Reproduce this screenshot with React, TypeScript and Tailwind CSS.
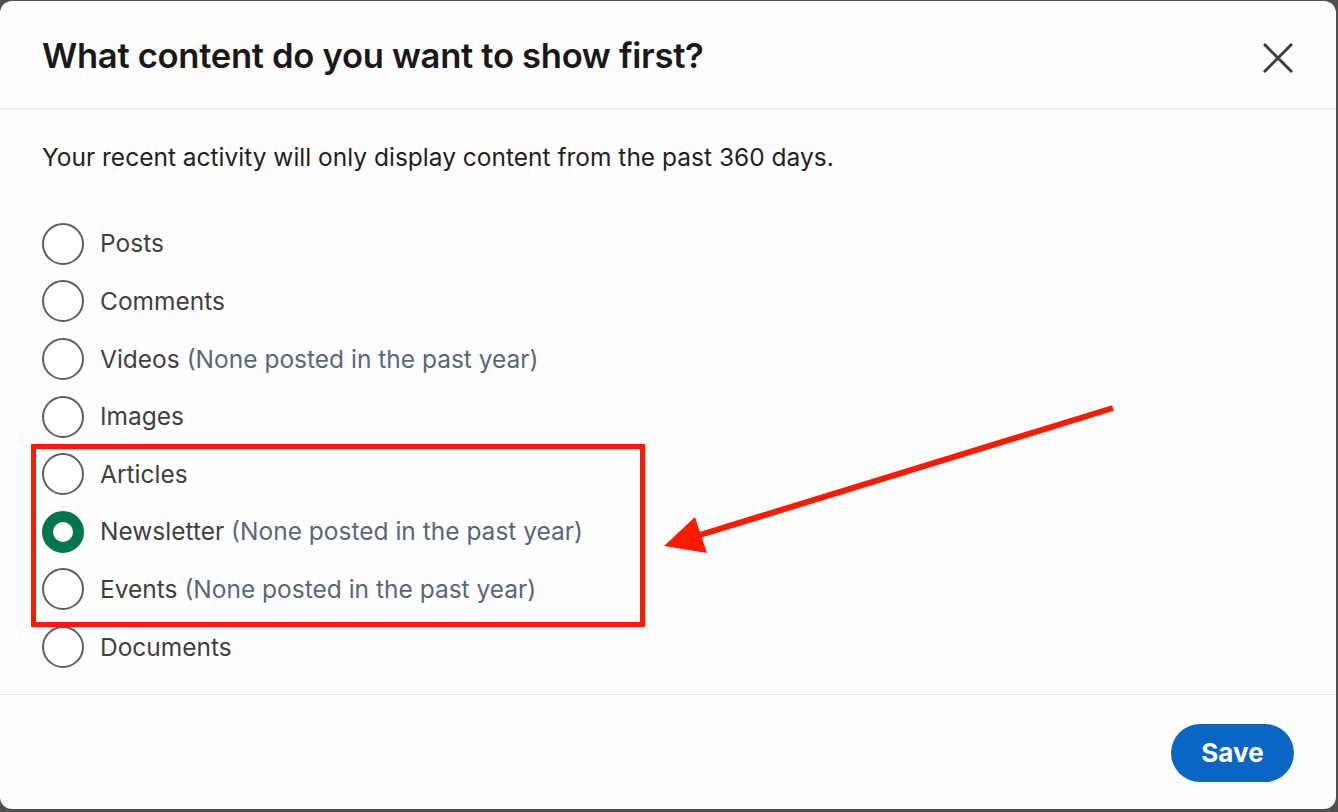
import React from "react";

type Option = { label: string; hint?: string; checked?: boolean };

const options: Option[] = [
  { label: "Posts" },
  { label: "Comments" },
  { label: "Videos", hint: "(None posted in the past year)" },
  { label: "Images" },
  { label: "Articles" },
  { label: "Newsletter", hint: "(None posted in the past year)", checked: true },
  { label: "Events", hint: "(None posted in the past year)" },
  { label: "Documents" },
];

function Radio({ checked }: { checked?: boolean }) {
  if (checked) {
    return <span className="block h-[42px] w-[42px] shrink-0 rounded-full border-[11px] border-[#01754f] bg-white" />;
  }
  return <span className="block h-[42px] w-[42px] shrink-0 rounded-full border-2 border-[#5e5e5e] bg-white" />;
}

export default function App() {
  return (
    <div className="h-[812px] w-full overflow-hidden bg-[#4f4f4f] pt-px pr-[2px] pb-[3px] font-['Inter',sans-serif]">
      <div className="relative flex h-full flex-col rounded-[12px] bg-[#fefefe]">
        {/* header */}
        <div className="flex h-[108px] shrink-0 items-center justify-between border-b border-[#e8e8e8] pl-[42px] pr-[42px]">
          <h1 className="pt-[2px] text-[34.6px] font-semibold tracking-[-0.3px] text-[#191919]">
            What content do you want to show first?
          </h1>
          <svg width="30" height="30" viewBox="0 0 30 30" className="mt-[6px] mr-[1px]">
            <path d="M1 1 L29 29 M29 1 L1 29" stroke="#3d3d3d" strokeWidth="3" />
          </svg>
        </div>

        {/* body */}
        <div className="flex-1 pl-[42px] pt-[31px]">
          <p className="text-[24.5px] leading-[34px] text-[#1f1f1f]">
            Your recent activity will only display content from the past 360 days.
          </p>
          <div className="mt-[41px] flex flex-col">
            {options.map((o) => (
              <label key={o.label} className="flex h-[57.6px] items-center gap-[16px]">
                <Radio checked={o.checked} />
                <span className="text-[24.5px] text-[#3f3f3f]">
                  {o.label}
                  {o.hint && <span className="text-[#56687a]"> {o.hint}</span>}
                </span>
              </label>
            ))}
          </div>
        </div>

        {/* footer */}
        <div className="flex h-[115px] shrink-0 items-center justify-end border-t border-[#e8e8e8] pr-[42px]">
          <button className="mt-[1px] h-[58px] w-[123px] rounded-full bg-[#0a66c2] text-[26px] font-bold text-white">
            Save
          </button>
        </div>

        {/* annotation */}
        <div className="pointer-events-none absolute left-[31px] top-[443px] h-[183px] w-[614px] border-[5px] border-[#fe1a00]" />
        <svg className="pointer-events-none absolute left-0 top-0" width="1336" height="808" viewBox="0 1 1336 808">
          <line x1="1113" y1="408" x2="690" y2="538" stroke="#fe1a00" strokeWidth="6" />
          <polygon points="664,546 695,517 707,553" fill="#fe1a00" />
        </svg>
      </div>
    </div>
  );
}
